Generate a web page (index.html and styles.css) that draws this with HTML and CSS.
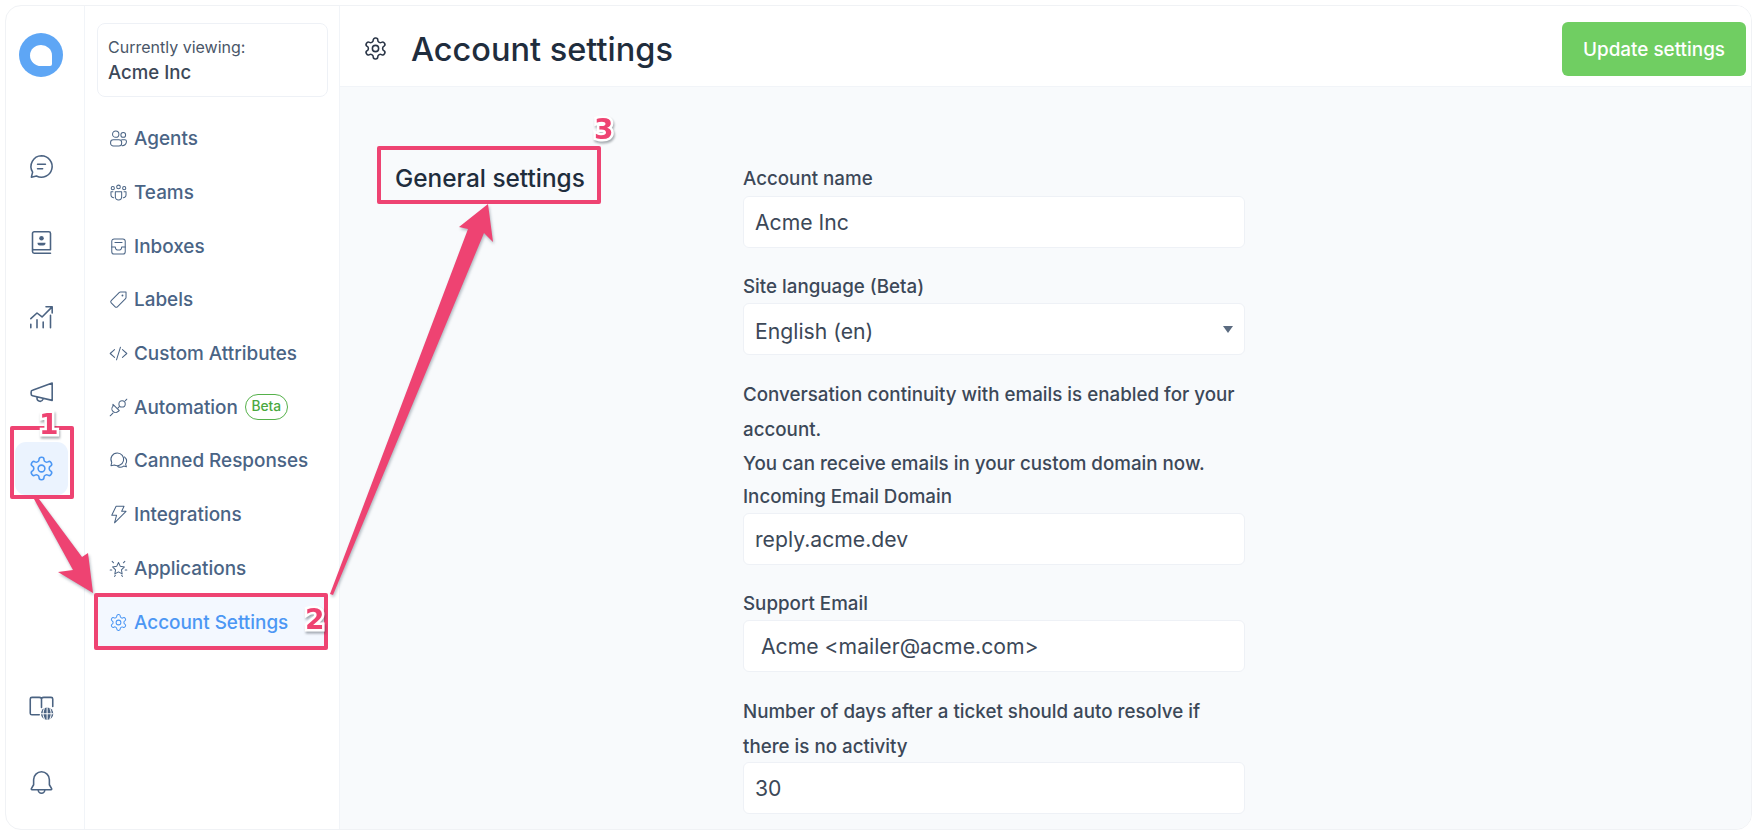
FILE: index.html
```html
<!DOCTYPE html>
<html lang="en">
<head>
<meta charset="utf-8">
<title>Account settings</title>
<link rel="stylesheet" href="styles.css">
</head>
<body>
<svg class="sprite" aria-hidden="true">
  <symbol id="i-gear" viewBox="0 0 24 24"><path d="M12.22 2h-.44a2 2 0 0 0-2 2v.18a2 2 0 0 1-1 1.73l-.43.25a2 2 0 0 1-2 0l-.15-.08a2 2 0 0 0-2.73.73l-.22.38a2 2 0 0 0 .73 2.73l.15.1a2 2 0 0 1 1 1.72v.51a2 2 0 0 1-1 1.74l-.15.09a2 2 0 0 0-.73 2.73l.22.38a2 2 0 0 0 2.73.73l.15-.08a2 2 0 0 1 2 0l.43.25a2 2 0 0 1 1 1.73V20a2 2 0 0 0 2 2h.44a2 2 0 0 0 2-2v-.18a2 2 0 0 1 1-1.73l.43-.25a2 2 0 0 1 2 0l.15.08a2 2 0 0 0 2.73-.73l.22-.39a2 2 0 0 0-.73-2.73l-.15-.08a2 2 0 0 1-1-1.74v-.5a2 2 0 0 1 1-1.74l.15-.09a2 2 0 0 0 .73-2.73l-.22-.38a2 2 0 0 0-2.73-.73l-.15.08a2 2 0 0 1-2 0l-.43-.25a2 2 0 0 1-1-1.73V4a2 2 0 0 0-2-2z"/><circle cx="12" cy="12" r="3"/></symbol>
  <symbol id="i-chat" viewBox="0 0 24 24"><path d="M12 2.500a9.500 9.500 0 1 1-4.500 17.900L3 21.500l1.100-4.500A9.500 9.500 0 0 1 12 2.500z"/><path d="M8.500 10h7M8.500 14h4.500"/></symbol>
  <symbol id="i-contacts" viewBox="0 0 24 24"><path d="M5.500 2.500h13a1.500 1.500 0 0 1 1.500 1.500v14.500H5.500A1.500 1.500 0 0 1 4 17V4a1.500 1.500 0 0 1 1.500-1.500zM4 17v3a1.500 1.500 0 0 0 1.500 1.500H20"/><circle class="solid" cx="12" cy="8.300" r="2"/><path class="solid" d="M8.500 12.200h7v.8c0 1-1.500 1.700-3.500 1.700s-3.500-.7-3.500-1.700z"/></symbol>
  <symbol id="i-reports" viewBox="0 0 24 24"><path d="M2.500 21v-3M8 21v-7M13.500 21v-5M20 21V10M2.500 13l5.500-5 4.500 3.500L21 3M16 2.500h5.500V8"/></symbol>
  <symbol id="i-campaign" viewBox="0 0 24 24"><path d="M21.500 3.500v15.500L4 14.800a1.500 1.500 0 0 1-1.200-1.500v-1.800A1.500 1.500 0 0 1 4 10zM8 16v1.200a2.700 2.700 0 0 0 5.300.7l.2-.8"/></symbol>
  <symbol id="i-book" viewBox="0 0 24 24"><path d="M10 18.500H3.500A1.500 1.500 0 0 1 2 17V4.500A1.500 1.500 0 0 1 3.500 3h6.500a2.500 2.500 0 0 1 2 1 2.500 2.500 0 0 1 2-1h6.500A1.500 1.500 0 0 1 22 4.500V11M12 4v8"/><circle class="solid" cx="17" cy="17.500" r="5.500"/><path class="knock" d="M11.500 17.500h11M17 12v11M14.500 13c-1.500 3-1.500 6 0 9M19.500 13c1.500 3 1.500 6 0 9"/></symbol>
  <symbol id="i-bell" viewBox="0 0 24 24"><path d="M12 2.500a7 7 0 0 0-7 7v4.500l-2 3.500a.6.6 0 0 0 .5.900h17a.6.6 0 0 0 .5-.900L19 14V9.500a7 7 0 0 0-7-7zM9 18.500a3 3 0 0 0 6 0"/></symbol>
  <symbol id="i-agents" viewBox="0 0 24 24"><circle cx="8.500" cy="6.500" r="4"/><circle cx="18" cy="7.500" r="3"/><rect x="2" y="13.500" width="14" height="8" rx="3.500"/><path d="M16 13.500h4a2 2 0 0 1 2 2v1a5 5 0 0 1-5.500 4.500"/></symbol>
  <symbol id="i-teams" viewBox="0 0 24 24"><circle cx="12" cy="5" r="2.300"/><circle cx="4.800" cy="6.500" r="2"/><circle cx="19.200" cy="6.500" r="2"/><path d="M8 11h8v6.500a4 4 0 0 1-8 0zM5 11H2.500v4a3.500 3.500 0 0 0 3.500 3.500M19 11h2.500v4a3.500 3.500 0 0 1-3.500 3.500"/></symbol>
  <symbol id="i-inbox" viewBox="0 0 24 24"><rect x="3.500" y="2.500" width="17" height="19" rx="3"/><path d="M7.500 7h9M3.500 12.500H8a4 4 0 0 0 8 0h4.500" /></symbol>
  <symbol id="i-tag" viewBox="0 0 24 24"><path d="M21.500 2.500h-7a2 2 0 0 0-1.400.6L2.800 13.400a2 2 0 0 0 0 2.800l5 5a2 2 0 0 0 2.800 0l10.300-10.300a2 2 0 0 0 .6-1.400z"/><circle class="solid" cx="17" cy="7" r="1.200"/></symbol>
  <symbol id="i-code" viewBox="0 0 24 24"><path d="M7 7l-5.500 5L7 17M17 7l5.500 5L17 17M14.500 4l-5 16"/></symbol>
  <symbol id="i-plug" viewBox="0 0 24 24"><path d="M1.500 22.500l3.500-3.500M11 13l2-2M20.500 3.500l2-2"/><path d="M5 11l8 8-1.500 1a4.500 4.500 0 0 1-6.500-6.500z" transform="translate(0 -3)"/><circle cx="16.500" cy="7.500" r="4"/></symbol>
  <symbol id="i-canned" viewBox="0 0 24 24"><path d="M10.500 2.500a8 8 0 1 1-3.700 15.100L2.500 18.500l1-4A8 8 0 0 1 10.500 2.500z"/><path d="M19.500 7.500a7 7 0 0 1 1.500 9l1 3.500-3.500-.9a7 7 0 0 1-7.500.4"/></symbol>
  <symbol id="i-bolt" viewBox="0 0 24 24"><path d="M9 1.500h10l-3 6.500h5.500L7 22.500l2.500-9.500H3.500z"/></symbol>
  <symbol id="i-app" viewBox="0 0 24 24"><path d="M12 4.500l2.300 4.800 5.200.7-3.800 3.600.9 5.200-4.600-2.500-4.600 2.500.9-5.200L4.500 10l5.200-.7z"/><path d="M4 3l1.800 1.800M20 3l-1.800 1.800M1.500 14H3.500M20.500 14h2M7 22l1-1.500M17 22l-1-1.500"/></symbol>
</svg>

<div class="frame">
  <nav class="rail">
    <div class="logo"><span class="logo-drop"></span></div>
    <ul class="rail-top">
      <li class="rail-item"><svg class="ico rail-ico"><use href="#i-chat"/></svg></li>
      <li class="rail-item"><svg class="ico rail-ico"><use href="#i-contacts"/></svg></li>
      <li class="rail-item"><svg class="ico rail-ico"><use href="#i-reports"/></svg></li>
      <li class="rail-item"><svg class="ico rail-ico"><use href="#i-campaign"/></svg></li>
      <li class="rail-item is-active"><svg class="ico rail-ico"><use href="#i-gear"/></svg></li>
    </ul>
    <ul class="rail-bottom">
      <li class="rail-item"><svg class="ico rail-ico"><use href="#i-book"/></svg></li>
      <li class="rail-item"><svg class="ico rail-ico"><use href="#i-bell"/></svg></li>
    </ul>
  </nav>

  <aside class="side">
    <div class="viewing">
      <div class="viewing-label">Currently viewing:</div>
      <div class="viewing-name">Acme Inc</div>
    </div>
    <ul class="menu">
      <li class="menu-item"><svg class="ico menu-ico"><use href="#i-agents"/></svg>Agents</li>
      <li class="menu-item"><svg class="ico menu-ico"><use href="#i-teams"/></svg>Teams</li>
      <li class="menu-item"><svg class="ico menu-ico"><use href="#i-inbox"/></svg>Inboxes</li>
      <li class="menu-item"><svg class="ico menu-ico"><use href="#i-tag"/></svg>Labels</li>
      <li class="menu-item"><svg class="ico menu-ico"><use href="#i-code"/></svg>Custom Attributes</li>
      <li class="menu-item"><svg class="ico menu-ico"><use href="#i-plug"/></svg>Automation<span class="beta">Beta</span></li>
      <li class="menu-item"><svg class="ico menu-ico"><use href="#i-canned"/></svg>Canned Responses</li>
      <li class="menu-item"><svg class="ico menu-ico"><use href="#i-bolt"/></svg>Integrations</li>
      <li class="menu-item"><svg class="ico menu-ico"><use href="#i-app"/></svg>Applications</li>
      <li class="menu-item is-active"><svg class="ico menu-ico"><use href="#i-gear"/></svg>Account Settings</li>
    </ul>
  </aside>

  <main class="main">
    <header class="topbar">
      <svg class="ico top-ico"><use href="#i-gear"/></svg>
      <h1 class="title">Account settings</h1>
      <button class="update" type="button">Update settings</button>
    </header>
    <div class="content">
      <h2 class="section">General settings</h2>
      <form class="form">
        <label class="field"><span class="lab lab-first">Account name</span><input class="inp" type="text" value="Acme Inc"></label>
        <label class="field"><span class="lab">Site language (Beta)</span>
          <span class="select-wrap"><select class="inp sel"><option>English (en)</option></select></span>
        </label>
        <div class="field">
          <p class="lab para">Conversation continuity with emails is enabled for your account.<br>You can receive emails in your custom domain now.</p>
          <label class="lab lab-tight" for="domain">Incoming Email Domain</label>
          <input class="inp" id="domain" type="text" value="reply.acme.dev">
        </div>
        <label class="field"><span class="lab">Support Email</span><input class="inp inp-indent" type="text" value="Acme &lt;mailer@acme.com&gt;"></label>
        <label class="field"><span class="lab para">Number of days after a ticket should auto resolve if there is no activity</span><input class="inp" type="text" value="30"></label>
      </form>
    </div>
  </main>
</div>

<div class="notes">
  <svg class="arrows" viewBox="0 0 1757 835">
    <polygon points="34,499 39,499 82,557 88,553 93,593 58,572 73,570"/>
    <polygon points="330,594 468,229 459,227 488,204 493,242 484,233 333,595"/>
  </svg>
  <div class="box box-1"></div>
  <div class="box box-2"></div>
  <div class="box box-3"></div>
  <span class="num num-1">1</span>
  <span class="num num-2">2</span>
  <span class="num num-3">3</span>
</div>
</body>
</html>
```
FILE: styles.css
```css
* { box-sizing: border-box; }
html, body { margin: 0; height: 100%; overflow: hidden; background: #fff; }
body { position: relative; font-family: Inter, "Noto Sans", sans-serif; color: #3c4858; }
ul { list-style: none; margin: 0; padding: 0; }
.sprite { width: 0; height: 0; position: absolute; }

.ico { fill: none; stroke: currentColor; stroke-width: 1.5; stroke-linecap: round; stroke-linejoin: round; display: block; flex: none; }
.solid { fill: currentColor; stroke: none; }
.knock { stroke: #fff; stroke-width: .9; fill: none; }

.frame { display: flex; height: 825px; margin: 5px; border: 1px solid #f0f2f5; border-radius: 16px; overflow: hidden; background: #fff; }

.rail { width: 79px; flex: none; border-right: 1px solid #f1f4f8; display: flex; flex-direction: column; align-items: center; padding: 27px 8px 0 0; color: #4b6382; }
.logo { width: 44px; height: 44px; flex: none; border-radius: 50%; background: #5ea6f5; display: flex; align-items: center; justify-content: center; }
.logo-drop { width: 22px; height: 21px; background: #fff; border-radius: 50% 50% 2px 50%; }
.rail-top { margin-top: 63px; display: flex; flex-direction: column; gap: 22px; align-items: center; }
.rail-bottom { margin-top: auto; margin-bottom: 20px; display: flex; flex-direction: column; gap: 21px; align-items: center; }
.rail-item { width: 53px; height: 53.4px; display: flex; align-items: center; justify-content: center; border-radius: 11px; }
.rail-item.is-active { background: #ebf3fe; color: #4c97f4; }
.rail-ico { width: 27px; height: 27px; stroke-width: 1.4; }

.side { width: 255px; flex: none; border-right: 1px solid #f1f4f8; padding: 17px 11px 0 12px; }
.viewing { height: 74px; border: 1px solid #eef1f6; border-radius: 8px; padding: 11px 10px; }
.viewing-label { font-size: 16px; line-height: 24px; color: #4a5668; }
.viewing-name { font-size: 18.600px; line-height: 27px; font-weight: 500; color: #3c4858; }
.menu { margin-top: 15px; }
.menu-item { display: flex; align-items: center; height: 53.7px; padding-left: 12px; font-size: 18.900px; font-weight: 450; color: #4a6485; border-radius: 4px; }
.menu-ico { width: 19px; height: 19px; margin-right: 6px; stroke-width: 1.3; }
.menu-item.is-active { color: #4c97f4; background: #f3f8ff; }
.beta { margin-left: 7px; height: 26px; padding: 0 5.500px; border: 1.4px solid #55b14a; border-radius: 13px; color: #4aa83e; font-size: 13.800px; font-weight: 450; line-height: 23px; }

.main { flex: 1; min-width: 0; display: flex; flex-direction: column; background: #f8fafc; }
.topbar { flex: none; height: 81px; display: flex; align-items: center; background: #fff; border-bottom: 1px solid #f1f4f8; padding: 5px 5px 0 23px; }
.top-ico { width: 25px; height: 25px; color: #2a3547; margin-right: 23px; }
.title { margin: 1px 0 0; font-size: 32.500px; font-weight: 500; color: #1f2d3d; }
.update { margin-left: auto; height: 54px; width: 184px; padding: 2px 0 0; border: 0; border-radius: 6px; background: #70ce62; color: #fff; font: 450 18.900px Inter, sans-serif; }

.content { flex: 1; min-height: 0; overflow: hidden; display: grid; grid-template-columns: 348px 502px; padding: 75px 0 0 55px; align-items: start; }
.section { margin: 0; font-size: 24.400px; line-height: 33px; font-weight: 500; color: #1f2d3d; }
.field { display: block; margin-bottom: 21px; }
.lab { display: block; margin: 0 0 -1px; padding-top: 1px; font-size: 18.750px; line-height: 34.400px; font-weight: 450; color: #3c4858; }
.lab-first { padding-top: 0; margin-bottom: 0; }
.para { line-height: 34.700px; padding-top: 2px; margin-bottom: -2px; }
.lab-tight { line-height: 33.500px; padding-top: 0; margin-bottom: 0; }
.inp { display: block; width: 100%; height: 51.500px; margin: 0; padding: 0 11px; border: 1px solid #eef1f6; border-radius: 6px; background: #fff; font: 400 21.200px Inter, sans-serif; color: #3c4858; outline: 0; }
.inp-indent { padding-left: 17px; }
.select-wrap { display: block; position: relative; }
.sel { appearance: none; padding-top: 3px; }
.select-wrap::after { content: ""; position: absolute; right: 12px; top: 23px; border: 5px solid transparent; border-top: 7px solid #5b6b80; border-bottom: 0; }

.notes { position: absolute; inset: 0; pointer-events: none; }
.arrows { position: absolute; inset: 0; width: 1757px; height: 835px; fill: #ee4372; filter: drop-shadow(1px 2px 1.500px rgba(40,60,80,.35)); }
.box { position: absolute; border: 4px solid #ee4372; border-radius: 2px; }
.box-1 { left: 10px; top: 426px; width: 64px; height: 73px; }
.box-2 { left: 94px; top: 593px; width: 234px; height: 57px; }
.box-3 { left: 377px; top: 146px; width: 224px; height: 58px; }
.num { position: absolute; font: 700 28px/30px "DejaVu Sans", sans-serif; color: #ee4372; -webkit-text-stroke: 5px #fff; paint-order: stroke fill; filter: drop-shadow(1px 2px 1px rgba(40,50,60,.4)); }
.num-1 { left: 39px; top: 410px; }
.num-2 { left: 305px; top: 605px; }
.num-3 { left: 594px; top: 115px; }
```
